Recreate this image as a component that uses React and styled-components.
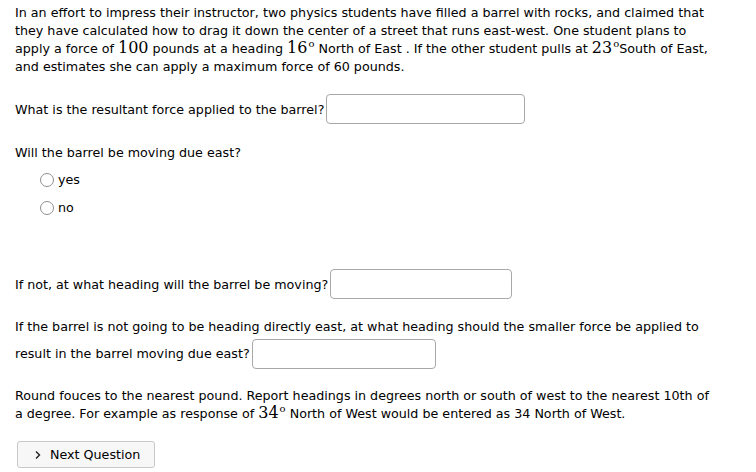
import React from "react";
import styled, { createGlobalStyle } from "styled-components";

const GlobalStyle = createGlobalStyle`
  body {
    margin: 0;
    background: #ffffff;
    color: #000000;
    font-family: "DejaVu Sans", Verdana, sans-serif;
    font-size: 12.7px;
  }
`;

const App = () => {
  return (
    <>
      <GlobalStyle />
      <Page>
        <Intro>
          In an effort to impress their instructor, two physics students have
          filled a barrel with rocks, and claimed that
          <br />
          they have calculated how to drag it down the center of a street that
          runs east-west. One student plans to
          <br />
          apply a force of <Math>100</Math> pounds at a heading{" "}
          <Math>
            16<Deg>o</Deg>
          </Math>{" "}
          North of East . If the other student pulls at{" "}
          <Math>
            23<Deg>o</Deg>
          </Math>
          South of East,
          <br />
          and estimates she can apply a maximum force of 60 pounds.
        </Intro>

        <Question $top={18}>
          What is the resultant force applied to the barrel?
          <Answer $width={197} />
        </Question>

        <Plain>Will the barrel be moving due east?</Plain>
        <Choices>
          <Choice>
            <Radio />
            yes
          </Choice>
          <Choice>
            <Radio />
            no
          </Choice>
        </Choices>

        <Question $top={54}>
          If not, at what heading will the barrel be moving?
          <Answer $width={180} />
        </Question>

        <LongQuestion>
          If the barrel is not going to be heading directly east, at what
          heading should the smaller force be applied to
          <br />
          result in the barrel moving due east?
          <Answer $width={182} />
        </LongQuestion>

        <Note>
          Round fouces to the nearest pound. Report headings in degrees north or
          south of west to the nearest 10th of
          <br />
          a degree. For example as response of{" "}
          <Math>
            34<Deg>o</Deg>
          </Math>{" "}
          North of West would be entered as 34 North of West.
        </Note>

        <NextButton>
          <Chevron viewBox="0 0 8 10">
            <path d="M2 1.5 L5.5 5 L2 8.5" fill="none" stroke="#222" strokeWidth="1.4" />
          </Chevron>
          Next Question
        </NextButton>
      </Page>
    </>
  );
};
export default App;

const Page = styled.div`
  padding: 4px 8px 0 15px;
  width: 756px;
  box-sizing: border-box;
  white-space: nowrap;
`;
const Intro = styled.p`
  margin: 0;
  line-height: 18px;
`;
const Math = styled.span`
  font-family: "DejaVu Serif", "Liberation Serif", serif;
  font-size: 16px;
  line-height: 0;
`;
const Deg = styled.sup`
  font-size: 10px;
  line-height: 0;
  vertical-align: 6px;
  margin-left: 1px;
`;
const Question = styled.div`
  display: flex;
  align-items: center;
  margin-top: ${(p) => p.$top}px;
`;
const Answer = styled.span`
  display: inline-block;
  width: ${(p) => p.$width}px;
  height: 28px;
  margin-left: 2px;
  border: 1px solid #a8a8a8;
  border-radius: 4px;
  background: #ffffff;
  vertical-align: middle;
`;
const Plain = styled.div`
  margin-top: 21px;
`;
const Choices = styled.div`
  display: flex;
  flex-direction: column;
  gap: 13px;
  padding-left: 25px;
  margin-top: 12px;
`;
const Choice = styled.label`
  display: flex;
  align-items: center;
  gap: 4px;
  height: 15px;
`;
const Radio = styled.span`
  width: 12px;
  height: 12px;
  border-radius: 50%;
  border: 1px solid #8f8f8f;
  background: #ffffff;
`;
const LongQuestion = styled.p`
  margin: 16px 0 0;
  line-height: 24px;
`;
const Note = styled.p`
  margin: 18px 0 0;
  line-height: 18px;
`;
const NextButton = styled.button`
  display: flex;
  align-items: center;
  gap: 8px;
  margin-top: 18px;
  margin-left: 2px;
  height: 27px;
  width: 138px;
  padding: 0 10px 0 16px;
  border: 1px solid #c8c8c8;
  border-radius: 3px;
  background: #f7f7f7;
  font-family: "DejaVu Sans", Verdana, sans-serif;
  font-size: 12.7px;
  color: #000;
  white-space: nowrap;
`;
const Chevron = styled.svg`
  width: 8px;
  height: 10px;
`;
